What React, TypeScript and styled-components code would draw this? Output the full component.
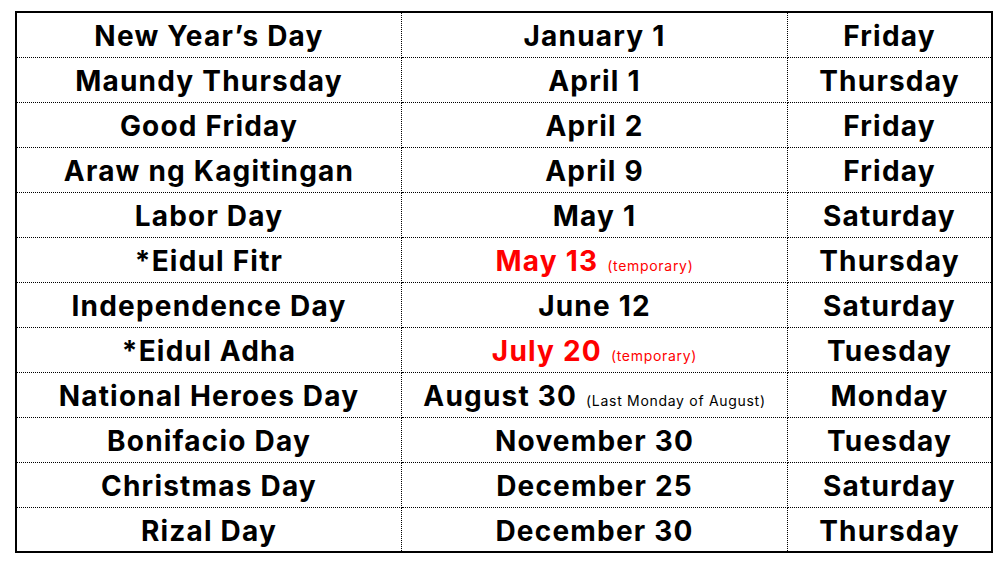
import React from "react";
import styled, { createGlobalStyle } from "styled-components";

const GlobalStyle = createGlobalStyle`
  html, body {
    margin: 0;
    padding: 0;
    background: #ffffff;
  }
  body {
    font-family: Inter, "Open Sans", "Liberation Sans", sans-serif;
  }
`;

const Page = styled.div`
  width: 1006px;
  height: 569px;
  padding: 11px 0 0 15px;
  box-sizing: border-box;
`;

const Table = styled.table`
  width: 978px;
  border-collapse: collapse;
  border: 2px solid #000;
  table-layout: fixed;
`;

const Row = styled.tr`
  height: 45px;
`;

const Cell = styled.td<{ $w?: number }>`
  ${(p) => (p.$w ? `width: ${p.$w}px;` : "")}
  border: 1px dotted #000;
  padding: 3px 0 0;
  text-align: center;
  vertical-align: middle;
  font-size: 28px;
  font-weight: 700;
  letter-spacing: 1.2px;
  color: #000;
  white-space: nowrap;
  line-height: 1;
`;

const Date = styled.span<{ $red?: boolean }>`
  color: ${(p) => (p.$red ? "#ff0000" : "#000")};
`;

const Note = styled.span<{ $red?: boolean }>`
  font-size: 14px;
  font-weight: 400;
  letter-spacing: 0.7px;
  margin-left: 9px;
  color: ${(p) => (p.$red ? "#ff0000" : "#000")};
`;

type Holiday = {
  name: string;
  date: string;
  day: string;
  red?: boolean;
  note?: string;
};

const holidays: Holiday[] = [
  { name: "New Year’s Day", date: "January 1", day: "Friday" },
  { name: "Maundy Thursday", date: "April 1", day: "Thursday" },
  { name: "Good Friday", date: "April 2", day: "Friday" },
  { name: "Araw ng Kagitingan", date: "April 9", day: "Friday" },
  { name: "Labor Day", date: "May 1", day: "Saturday" },
  { name: "*Eidul Fitr", date: "May 13", day: "Thursday", red: true, note: "(temporary)" },
  { name: "Independence Day", date: "June 12", day: "Saturday" },
  { name: "*Eidul Adha", date: "July 20", day: "Tuesday", red: true, note: "(temporary)" },
  { name: "National Heroes Day", date: "August 30", day: "Monday", note: "(Last Monday of August)" },
  { name: "Bonifacio Day", date: "November 30", day: "Tuesday" },
  { name: "Christmas Day", date: "December 25", day: "Saturday" },
  { name: "Rizal Day", date: "December 30", day: "Thursday" },
];

export default function App() {
  return (
    <Page>
      <GlobalStyle />
      <Table>
        <tbody>
          {holidays.map((h, i) => (
            <Row key={h.name}>
              <Cell $w={i === 0 ? 384 : undefined}>{h.name}</Cell>
              <Cell $w={i === 0 ? 385 : undefined}>
                <Date $red={h.red}>{h.date}</Date>
                {h.note && <Note $red={h.red}>{h.note}</Note>}
              </Cell>
              <Cell>{h.day}</Cell>
            </Row>
          ))}
        </tbody>
      </Table>
    </Page>
  );
}
